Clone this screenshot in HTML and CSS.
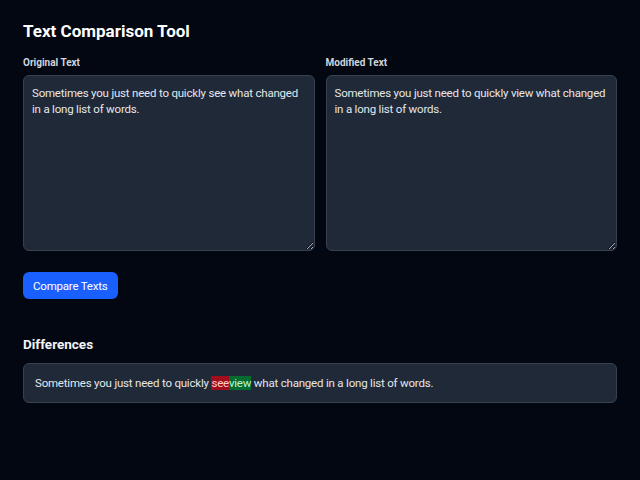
FILE: index.html
```html
<!DOCTYPE html>
<html>
<head>
<meta charset="utf-8">
<link rel="stylesheet" href="styles.css">
</head>
<body>
<div class="page">
  <h1 class="title">Text Comparison Tool</h1>
  <div class="columns">
    <div class="field">
      <label class="label">Original Text</label>
      <textarea class="input">Sometimes you just need to quickly see what changed in a long list of words.</textarea>
    </div>
    <div class="field">
      <label class="label">Modified Text</label>
      <textarea class="input">Sometimes you just need to quickly view what changed in a long list of words.</textarea>
    </div>
  </div>
  <button class="btn">Compare Texts</button>
  <h2 class="subtitle">Differences</h2>
  <div class="result">Sometimes you just need to quickly <span class="del">see</span><span class="ins">view</span> what changed in a long list of words.</div>
</div>
</body>
</html>
```
FILE: styles.css
```css
* { box-sizing: border-box; }
html, body { margin: 0; background: #030712; }
body { font-family: "Roboto", "Noto Sans", sans-serif; color: #f3f4f6; }
.page { padding: 19px 23px 24px 23px; }
.title { margin: 0 0 13px 0; font-size: 17px; font-weight: 700; color: #ffffff; line-height: 24px; }
.columns { display: grid; grid-template-columns: 1fr 1fr; gap: 11px; }
.field { display: flex; flex-direction: column; }
.label { font-size: 10px; font-weight: 700; color: #d1d5db; line-height: 14px; margin-bottom: 5px; }
.input {
  height: 176px; resize: vertical; background: #1f2937; border: 1px solid #374151; border-radius: 6px;
  color: #e5e7eb; font-family: inherit; font-size: 11.5px; letter-spacing: -0.2px; line-height: 16px; padding: 9px 8px;
}
.btn {
  margin-top: 21px; background: #1a5fff; color: #fff; border: none; border-radius: 6px;
  font-family: inherit; font-size: 11.5px; letter-spacing: -0.2px; height: 27px; padding: 0 10px; cursor: pointer;
}
.subtitle { margin: 35px 0 9px 0; font-size: 13.5px; font-weight: 700; line-height: 20px; color: #f3f4f6; }
.result {
  background: #1f2937; border: 1px solid #374151; border-radius: 6px; padding: 11px 11px;
  font-size: 11.5px; letter-spacing: -0.2px; line-height: 16px; color: #e5e7eb;
}
.del { background: #a10d1d; color: #fecaca; }
.ins { background: #046c30; color: #bbf7d0; }
```
